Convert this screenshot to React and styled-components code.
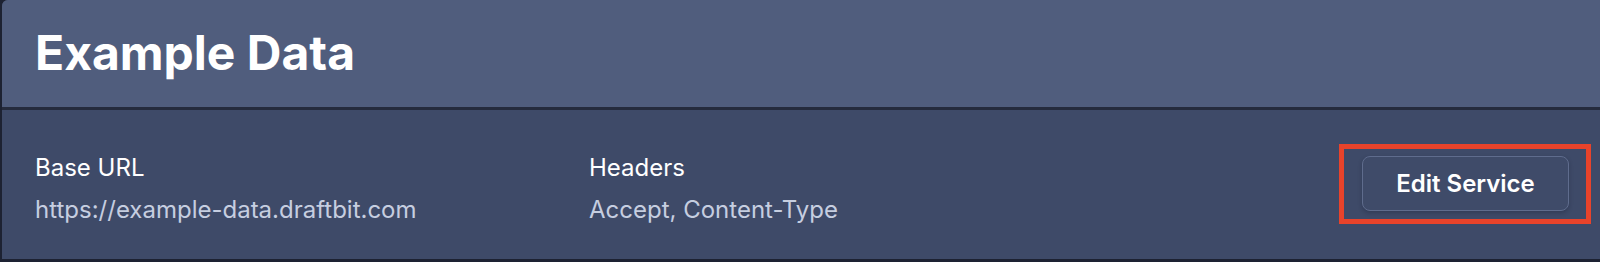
import React from 'react';
import styled, { createGlobalStyle } from 'styled-components';

const GlobalStyle = createGlobalStyle`
  html, body {
    margin: 0;
    padding: 0;
    background: #1d2232;
    font-family: Inter, "Noto Sans", sans-serif;
  }
`;

const Panel = styled.div`
  margin-left: 2px;
  height: 259px;
  border-radius: 6px 0 0 0;
  overflow: hidden;
  background: #3e4a68;
`;

const Header = styled.div`
  box-sizing: border-box;
  height: 110px;
  padding: 24px 0 0 33px;
  background: #505d7d;
  border-bottom: 3px solid #252b3d;
`;

const Title = styled.h1`
  margin: 0;
  font-size: 48px;
  font-weight: 700;
  line-height: 58px;
  color: #ffffff;
`;

const Body = styled.div`
  display: flex;
  align-items: center;
  height: 149px;
  padding: 0 9px 0 33px;
`;

const Fields = styled.div`
  flex: 1;
  display: grid;
  grid-template-columns: 554px 1fr;
`;

const Field = styled.div`
  display: flex;
  flex-direction: column;
  gap: 13px;
  padding-top: 8px;
`;

const Label = styled.div`
  font-size: 24px;
  line-height: 29px;
  font-weight: 400;
  color: #ffffff;
`;

const Value = styled.div`
  font-size: 24px;
  line-height: 29px;
  font-weight: 400;
  color: #c6cee0;
`;

const Highlight = styled.div`
  border: 5px solid #e8432b;
  padding: 7px 17px 8px 18px;
  margin-top: -1px;
`;

const Button = styled.button`
  box-sizing: border-box;
  width: 207px;
  height: 55px;
  border: 1.5px solid #5f6c8d;
  border-radius: 8px;
  background: #3f4b69;
  box-shadow: 0 2px 4px rgba(15, 20, 35, 0.25);
  color: #ffffff;
  font-family: Inter, "Noto Sans", sans-serif;
  font-size: 24px;
  font-weight: 600;
  cursor: pointer;
  outline: none;
`;

const fields = [
  { label: 'Base URL', value: 'https://example-data.draftbit.com' },
  { label: 'Headers', value: 'Accept, Content-Type' },
];

export default function App() {
  return (
    <>
      <GlobalStyle />
      <Panel>
        <Header>
          <Title>Example Data</Title>
        </Header>
        <Body>
          <Fields>
            {fields.map((f) => (
              <Field key={f.label}>
                <Label>{f.label}</Label>
                <Value>{f.value}</Value>
              </Field>
            ))}
          </Fields>
          <Highlight>
            <Button>Edit Service</Button>
          </Highlight>
        </Body>
      </Panel>
    </>
  );
}
